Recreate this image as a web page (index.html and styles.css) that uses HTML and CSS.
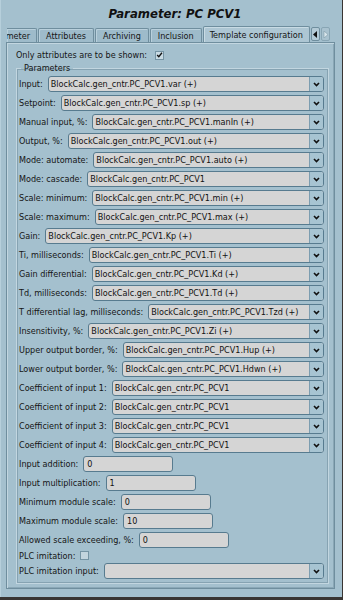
FILE: index.html
```html
<!DOCTYPE html>
<html>
<head>
<meta charset="utf-8">
<link rel="stylesheet" href="styles.css">
</head>
<body>
<div class="window">
  <div class="title">Parameter: PC PCV1</div>
  <div class="tabbar">
    <div class="tab first"><span>Parameter</span></div>
    <div class="tab">Attributes</div>
    <div class="tab">Archiving</div>
    <div class="tab">Inclusion</div>
    <div class="tab active">Template configuration</div>
    <div class="arrow left"><svg width="5" height="7" viewBox="0 0 5 7"><polygon points="4,0 4,7 0,3.5" fill="#111"/></svg></div>
    <div class="arrow right"><svg width="5" height="7" viewBox="0 0 5 7"><polygon points="1,0 1,7 5,3.5" fill="#d9e6ec" stroke="#7f9aa8" stroke-width="0.6"/></svg></div>
  </div>
  <div class="panel">
    <div class="onlyattr">Only attributes are to be shown: <span class="check checked"><svg width="8" height="8" viewBox="0 0 8 8"><path d="M1.3 4 L3.2 6 L6.8 1.4" fill="none" stroke="#111" stroke-width="1.5"/></svg></span></div>
    <fieldset class="group">
      <legend>Parameters</legend>
      <div class="row"><span>Input:</span><div class="combo"><span class="val">BlockCalc.gen_cntr.PC_PCV1.var (+)</span><span class="btn"><svg width="7" height="5" viewBox="0 0 7 5"><path d="M1 1 L3.5 3.6 L6 1" fill="none" stroke="#111" stroke-width="1.6"/></svg></span></div></div>
      <div class="row"><span>Setpoint:</span><div class="combo"><span class="val">BlockCalc.gen_cntr.PC_PCV1.sp (+)</span><span class="btn"><svg width="7" height="5" viewBox="0 0 7 5"><path d="M1 1 L3.5 3.6 L6 1" fill="none" stroke="#111" stroke-width="1.6"/></svg></span></div></div>
      <div class="row"><span>Manual input, %:</span><div class="combo"><span class="val">BlockCalc.gen_cntr.PC_PCV1.manIn (+)</span><span class="btn"><svg width="7" height="5" viewBox="0 0 7 5"><path d="M1 1 L3.5 3.6 L6 1" fill="none" stroke="#111" stroke-width="1.6"/></svg></span></div></div>
      <div class="row"><span>Output, %:</span><div class="combo"><span class="val">BlockCalc.gen_cntr.PC_PCV1.out (+)</span><span class="btn"><svg width="7" height="5" viewBox="0 0 7 5"><path d="M1 1 L3.5 3.6 L6 1" fill="none" stroke="#111" stroke-width="1.6"/></svg></span></div></div>
      <div class="row"><span>Mode: automate:</span><div class="combo"><span class="val">BlockCalc.gen_cntr.PC_PCV1.auto (+)</span><span class="btn"><svg width="7" height="5" viewBox="0 0 7 5"><path d="M1 1 L3.5 3.6 L6 1" fill="none" stroke="#111" stroke-width="1.6"/></svg></span></div></div>
      <div class="row"><span>Mode: cascade:</span><div class="combo"><span class="val">BlockCalc.gen_cntr.PC_PCV1</span><span class="btn"><svg width="7" height="5" viewBox="0 0 7 5"><path d="M1 1 L3.5 3.6 L6 1" fill="none" stroke="#111" stroke-width="1.6"/></svg></span></div></div>
      <div class="row"><span>Scale: minimum:</span><div class="combo"><span class="val">BlockCalc.gen_cntr.PC_PCV1.min (+)</span><span class="btn"><svg width="7" height="5" viewBox="0 0 7 5"><path d="M1 1 L3.5 3.6 L6 1" fill="none" stroke="#111" stroke-width="1.6"/></svg></span></div></div>
      <div class="row"><span>Scale: maximum:</span><div class="combo"><span class="val">BlockCalc.gen_cntr.PC_PCV1.max (+)</span><span class="btn"><svg width="7" height="5" viewBox="0 0 7 5"><path d="M1 1 L3.5 3.6 L6 1" fill="none" stroke="#111" stroke-width="1.6"/></svg></span></div></div>
      <div class="row"><span>Gain:</span><div class="combo"><span class="val">BlockCalc.gen_cntr.PC_PCV1.Kp (+)</span><span class="btn"><svg width="7" height="5" viewBox="0 0 7 5"><path d="M1 1 L3.5 3.6 L6 1" fill="none" stroke="#111" stroke-width="1.6"/></svg></span></div></div>
      <div class="row"><span>Ti, milliseconds:</span><div class="combo"><span class="val">BlockCalc.gen_cntr.PC_PCV1.Ti (+)</span><span class="btn"><svg width="7" height="5" viewBox="0 0 7 5"><path d="M1 1 L3.5 3.6 L6 1" fill="none" stroke="#111" stroke-width="1.6"/></svg></span></div></div>
      <div class="row"><span>Gain differential:</span><div class="combo"><span class="val">BlockCalc.gen_cntr.PC_PCV1.Kd (+)</span><span class="btn"><svg width="7" height="5" viewBox="0 0 7 5"><path d="M1 1 L3.5 3.6 L6 1" fill="none" stroke="#111" stroke-width="1.6"/></svg></span></div></div>
      <div class="row"><span>Td, milliseconds:</span><div class="combo"><span class="val">BlockCalc.gen_cntr.PC_PCV1.Td (+)</span><span class="btn"><svg width="7" height="5" viewBox="0 0 7 5"><path d="M1 1 L3.5 3.6 L6 1" fill="none" stroke="#111" stroke-width="1.6"/></svg></span></div></div>
      <div class="row"><span>T differential lag, milliseconds:</span><div class="combo"><span class="val">BlockCalc.gen_cntr.PC_PCV1.Tzd (+)</span><span class="btn"><svg width="7" height="5" viewBox="0 0 7 5"><path d="M1 1 L3.5 3.6 L6 1" fill="none" stroke="#111" stroke-width="1.6"/></svg></span></div></div>
      <div class="row"><span>Insensitivity, %:</span><div class="combo"><span class="val">BlockCalc.gen_cntr.PC_PCV1.Zi (+)</span><span class="btn"><svg width="7" height="5" viewBox="0 0 7 5"><path d="M1 1 L3.5 3.6 L6 1" fill="none" stroke="#111" stroke-width="1.6"/></svg></span></div></div>
      <div class="row"><span>Upper output border, %:</span><div class="combo"><span class="val">BlockCalc.gen_cntr.PC_PCV1.Hup (+)</span><span class="btn"><svg width="7" height="5" viewBox="0 0 7 5"><path d="M1 1 L3.5 3.6 L6 1" fill="none" stroke="#111" stroke-width="1.6"/></svg></span></div></div>
      <div class="row"><span>Lower output border, %:</span><div class="combo"><span class="val">BlockCalc.gen_cntr.PC_PCV1.Hdwn (+)</span><span class="btn"><svg width="7" height="5" viewBox="0 0 7 5"><path d="M1 1 L3.5 3.6 L6 1" fill="none" stroke="#111" stroke-width="1.6"/></svg></span></div></div>
      <div class="row"><span>Coefficient of input 1:</span><div class="combo"><span class="val">BlockCalc.gen_cntr.PC_PCV1</span><span class="btn"><svg width="7" height="5" viewBox="0 0 7 5"><path d="M1 1 L3.5 3.6 L6 1" fill="none" stroke="#111" stroke-width="1.6"/></svg></span></div></div>
      <div class="row"><span>Coefficient of input 2:</span><div class="combo"><span class="val">BlockCalc.gen_cntr.PC_PCV1</span><span class="btn"><svg width="7" height="5" viewBox="0 0 7 5"><path d="M1 1 L3.5 3.6 L6 1" fill="none" stroke="#111" stroke-width="1.6"/></svg></span></div></div>
      <div class="row"><span>Coefficient of input 3:</span><div class="combo"><span class="val">BlockCalc.gen_cntr.PC_PCV1</span><span class="btn"><svg width="7" height="5" viewBox="0 0 7 5"><path d="M1 1 L3.5 3.6 L6 1" fill="none" stroke="#111" stroke-width="1.6"/></svg></span></div></div>
      <div class="row"><span>Coefficient of input 4:</span><div class="combo"><span class="val">BlockCalc.gen_cntr.PC_PCV1</span><span class="btn"><svg width="7" height="5" viewBox="0 0 7 5"><path d="M1 1 L3.5 3.6 L6 1" fill="none" stroke="#111" stroke-width="1.6"/></svg></span></div></div>
      <div class="row"><span>Input addition:</span><div class="edit">0</div></div>
      <div class="row"><span>Input multiplication:</span><div class="edit">1</div></div>
      <div class="row"><span>Minimum module scale:</span><div class="edit">0</div></div>
      <div class="row"><span>Maximum module scale:</span><div class="edit">10</div></div>
      <div class="row"><span>Allowed scale exceeding, %:</span><div class="edit">0</div></div>
      <div class="row short"><span>PLC imitation:</span><span class="check"></span></div>
      <div class="row"><span>PLC imitation input:</span><div class="combo"><span class="val"></span><span class="btn"><svg width="7" height="5" viewBox="0 0 7 5"><path d="M1 1 L3.5 3.6 L6 1" fill="none" stroke="#111" stroke-width="1.6"/></svg></span></div></div>
    </fieldset>
  </div>
</div>
</body>
</html>
```

FILE: styles.css
```css
html, body {
  margin: 0;
  padding: 0;
}
body {
  background: #393533;
  font-family: "DejaVu Sans Condensed", "DejaVu Sans", sans-serif;
  font-stretch: condensed;
  font-size: 9px;
  color: #151515;
  width: 343px;
  height: 600px;
  overflow: hidden;
}
.window {
  width: 342px;
  height: 597px;
  background: #a4c0ce;
  box-sizing: border-box;
  border-left: 1px solid #b6cfdb;
  display: flex;
  flex-direction: column;
}
.title {
  height: 26px;
  line-height: 28px;
  text-align: center;
  font-weight: bold;
  font-style: italic;
  font-size: 13px;
  padding-left: 7px;
  color: #111;
}
.tabbar {
  display: flex;
  align-items: flex-end;
  height: 16px;
  margin-left: 6px;
}
.tab {
  height: 14px;
  box-sizing: border-box;
  border: 1px solid #6f8e9e;
  border-bottom: none;
  border-radius: 2px 2px 0 0;
  background: #9ebbca;
  display: flex;
  align-items: center;
  justify-content: center;
  padding: 0 7px;
  margin-right: 1px;
  white-space: nowrap;
  flex-shrink: 0;
  box-shadow: inset 1px 1px 0 #b9d0dc;
}
.tab.first {
  width: 30px;
  padding: 0 6px 0 0;
  justify-content: flex-end;
  overflow: hidden;
  border-left: none;
  border-radius: 0 2px 0 0;
}
.tab.active {
  height: 16px;
  background: #adc6d3;
  padding: 0 6px;
  margin-right: 1px;
  box-shadow: inset 1px 1px 0 #c8dbe4;
}
.arrow {
  width: 9px;
  height: 14px;
  box-sizing: border-box;
  border: 1px solid #6f8e9e;
  border-radius: 2px;
  background: #b3cad6;
  display: flex;
  align-items: center;
  justify-content: center;
  margin-right: 1px;
  margin-bottom: 1px;
  flex-shrink: 0;
}
.arrow.right {
  background: #a9c2cf;
  border-color: #88a5b4;
}
.panel {
  margin: 0 7px 9px 5px;
  flex: 1;
  border: 1px solid #6f8e9e;
  box-shadow: inset 1px 1px 0 #c2d6e0, inset -1px -1px 0 #8aa7b6;
  display: flex;
  flex-direction: column;
  padding: 0 5px 0 9px;
}
.onlyattr {
  margin-top: 6px;
  height: 12px;
  line-height: 12px;
  display: flex;
  align-items: center;
  white-space: pre;
}
.check {
  display: inline-flex;
  width: 9px;
  height: 9px;
  box-sizing: border-box;
  border: 1px solid #7594a4;
  background: #c3d5de;
  align-items: center;
  justify-content: center;
  margin-left: 4px;
}
.check.checked {
  margin-left: 5px;
  background: #c9dbe4;
}
.group {
  margin: 1px 0 4px 0;
  padding: 2px 4px 4px 2px;
  border: 1px solid #c2d6e0;
  box-shadow: 0 0 0 1px #86a3b2 inset;
  flex: 1;
  min-width: 0;
}
.group legend {
  padding: 0 3px;
  margin-left: 2px;
  line-height: 12px;
}
.row {
  display: flex;
  align-items: center;
  height: 16px;
  margin-bottom: 3px;
  gap: 5px;
  white-space: nowrap;
}
.row:last-child {
  margin-bottom: 0;
}
.row.short {
  height: 9px;
}
.row.short .check {
  margin-left: 0;
}
.combo {
  flex: 1;
  min-width: 0;
  height: 16px;
  box-sizing: border-box;
  border: 1px solid #577b8f;
  border-radius: 3px;
  background: #d5d5d5;
  display: flex;
  overflow: hidden;
}
.combo .val {
  flex: 1;
  padding-left: 2px;
  line-height: 14px;
  overflow: hidden;
  color: #111;
}
.combo .btn {
  width: 13px;
  border-left: 1px solid #7c9db0;
  background: #a7c4d2;
  display: flex;
  align-items: center;
  justify-content: center;
}
.edit {
  width: 90px;
  height: 16px;
  box-sizing: border-box;
  border: 1px solid #577b8f;
  border-radius: 3px;
  background: #d5d5d5;
  padding-left: 3px;
  line-height: 14px;
  color: #111;
}
```
